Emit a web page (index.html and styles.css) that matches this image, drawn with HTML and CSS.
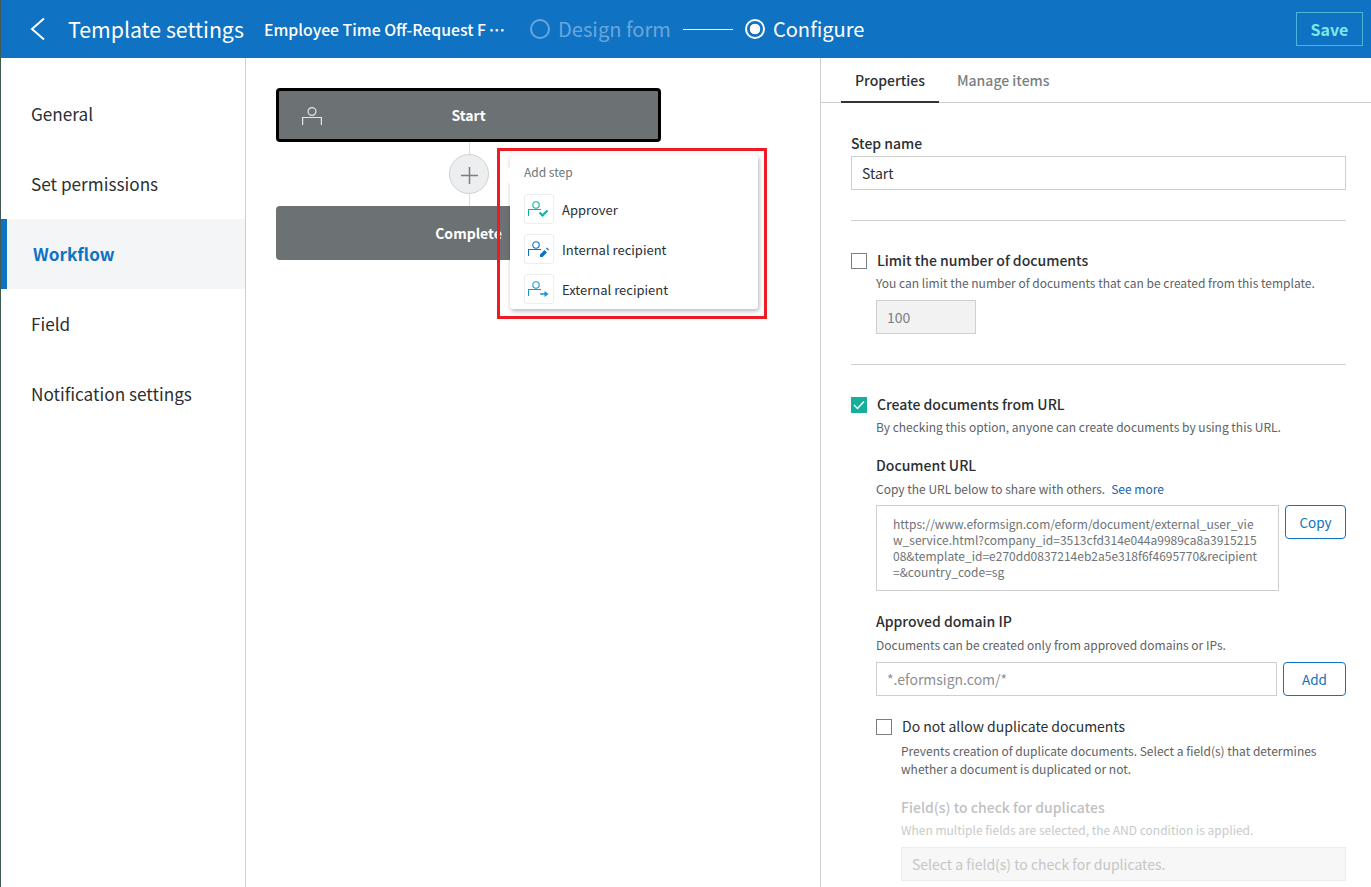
FILE: index.html
```html
<!DOCTYPE html>
<html lang="en">
<head>
<meta charset="utf-8">
<title>Template settings</title>
<link rel="stylesheet" href="styles.css">
</head>
<body>
<header class="topbar">
  <svg class="back" width="16" height="24" viewBox="0 0 16 24"><path d="M14 1.500 2 12 14 22.500" fill="none" stroke="#fff" stroke-width="2"/></svg>
  <h1 class="title">Template settings</h1>
  <div class="doc-name">Employee Time Off-Request F<span class="dots">···</span></div>
  <div class="step step-off"><span class="radio"></span>Design form</div>
  <span class="step-line"></span>
  <div class="step"><span class="radio radio-on"></span>Configure</div>
  <button class="save">Save</button>
</header>
<div class="main">
  <nav class="side">
    <a class="nav-item">General</a>
    <a class="nav-item">Set permissions</a>
    <a class="nav-item nav-active">Workflow</a>
    <a class="nav-item">Field</a>
    <a class="nav-item">Notification settings</a>
  </nav>
  <section class="canvas">
    <div class="node node-start">
      <svg class="node-icon" width="20" height="18" viewBox="0 0 20 18"><g fill="none" stroke="#e6e8e8" stroke-width="1.200"><circle cx="10" cy="4.500" r="3.900"/><path d="M.6 18v-7.500h18.800V18"/></g></svg>
      Start
    </div>
    <div class="link"><div class="add-btn"><svg class="plus" width="17" height="17" viewBox="0 0 17 17"><path d="M8.500 0v17M0 8.500h17" stroke="#7a7f82" stroke-width="1.500"/></svg></div></div>
    <div class="node">Complete</div>
    <div class="menu">
      <div class="menu-title">Add step</div>
      <div class="menu-item">
        <span class="menu-icon"><svg width="22" height="20" viewBox="0 0 22 20"><g fill="none" stroke="#14b09b" stroke-width="1.100"><circle cx="8" cy="6" r="3.200"/><path d="M.5 17v-6.500H13"/></g><path d="M11.500 13.500l3 3 5-5" fill="none" stroke="#14b09b" stroke-width="2"/></svg></span>Approver
      </div>
      <div class="menu-item">
        <span class="menu-icon"><svg width="22" height="20" viewBox="0 0 22 20"><g fill="none" stroke="#0f72c3" stroke-width="1.100"><circle cx="8" cy="6" r="3.200"/><path d="M.5 17v-6.500H13"/></g><path d="M12 18v-2.500l4.500-4.500 2.500 2.500-4.500 4.500zM18 9.500l1-1 2 2-1 1z" fill="#0f72c3"/></svg></span>Internal recipient
      </div>
      <div class="menu-item">
        <span class="menu-icon"><svg width="22" height="20" viewBox="0 0 22 20"><g fill="none" stroke="#1a94cf" stroke-width="1.100"><circle cx="8" cy="6" r="3.200"/><path d="M.5 17v-6.500H13"/></g><path d="M12 14.300h5v1.400h-5zM16.500 12l4 3-4 3z" fill="#1a94cf"/></svg></span>External recipient
      </div>
    </div>
    <div class="highlight"></div>
  </section>
  <aside class="panel">
    <div class="tabs"><span class="tab tab-on">Properties</span><span class="tab">Manage items</span></div>
    <div class="panel-body">
      <label class="label">Step name</label>
      <div class="input input-step">Start</div>
      <hr class="rule rule-a">
      <div class="check-row"><span class="check"></span><span class="label label-up">Limit the number of documents</span></div>
      <p class="hint hint-first">You can limit the number of documents that can be created from this template.</p>
      <div class="input input-num">100</div>
      <hr class="rule rule-b">
      <div class="check-row"><span class="check check-on"><svg width="12" height="10" viewBox="0 0 12 10"><path d="M1 5l3.500 3.500L11 1.500" fill="none" stroke="#fff" stroke-width="1.400"/></svg></span><span class="label label-up">Create documents from URL</span></div>
      <p class="hint hint-first">By checking this option, anyone can create documents by using this URL.</p>
      <div class="indent">
        <label class="label label-up label-url">Document URL</label>
        <p class="hint hint-sub">Copy the URL below to share with others.<a class="more">See more</a></p>
        <div class="field-row row-url">
          <div class="url-box">https://www.eformsign.com/eform/document/external_user_vie<br>w_service.html?company_id=3513cfd314e044a9989ca8a3915215<br>08&amp;template_id=e270dd0837214eb2a5e318f6f4695770&amp;recipient<br>=&amp;country_code=sg</div>
          <button class="btn btn-copy">Copy</button>
        </div>
        <label class="label label-up label-ip">Approved domain IP</label>
        <p class="hint hint-sub">Documents can be created only from approved domains or IPs.</p>
        <div class="field-row row-ip">
          <div class="input input-ip">*.eformsign.com/*</div>
          <button class="btn btn-add">Add</button>
        </div>
        <div class="check-row check-dup"><span class="check"></span><span class="dup-label">Do not allow duplicate documents</span></div>
        <div class="dup">
          <p class="hint hint-dup">Prevents creation of duplicate documents. Select a field(s) that determines<br>whether a document is duplicated or not.</p>
          <div class="label label-off">Field(s) to check for duplicates</div>
          <p class="hint hint-off">When multiple fields are selected, the AND condition is applied.</p>
          <div class="input input-off">Select a field(s) to check for duplicates.</div>
        </div>
      </div>
    </div>
  </aside>
</div>
</body>
</html>
```
FILE: styles.css
```css
* { box-sizing: border-box; }
html, body { margin: 0; height: 100%; overflow: hidden; }
body {
  font-family: "Noto Sans CJK KR", "Noto Sans", sans-serif;
  color: #2b2f33;
  background: #fff;
  border-left: 1px solid #3f5a55;
  width: 1371px;
  height: 887px;
}
.topbar {
  height: 58px;
  background: #0f72c3;
  display: flex;
  align-items: center;
  color: #fff;
  padding-left: 29px;
  margin-left: -1px;
  border-left: 1px solid #4d7a8c;
}
.back { flex: none; }
.title { font-size: 21.300px; font-weight: 400; margin: -2px 0 0 22px; width: 196px; white-space: nowrap; }
.doc-name { font-size: 15.800px; font-weight: 500; width: 266px; white-space: nowrap; }
.dots { letter-spacing: -3.700px; margin-left: 1px; }
.step { display: flex; align-items: center; font-size: 20.100px; gap: 8px; white-space: nowrap; padding-bottom: 1px; }
.step-off { color: #6aa6da; }
.radio { width: 20px; height: 20px; border: 2px solid currentColor; border-radius: 50%; display: block; }
.radio-on { background: radial-gradient(circle, #fff 0 5px, transparent 5.600px); }
.step-line { width: 50px; height: 1px; background: #fff; margin: 0 12px; }
.save {
  margin-left: auto;
  margin-right: 8px;
  width: 67px;
  height: 34px;
  background: transparent;
  border: 1px solid #4db4d8;
  color: #7ee8e8;
  font: 700 16px "Noto Sans CJK KR", sans-serif;
  padding: 0;
}
.main { display: flex; height: 829px; }
.side { width: 245px; flex: none; border-right: 1px solid #cfcfcf; padding-top: 21px; }
.nav-item { display: flex; align-items: center; height: 70px; padding: 0 0 1px 30px; font-size: 17.200px; color: #2b2f33; }
.nav-active { background: #f4f5f7; border-left: 6px solid #0f72c3; padding-left: 26px; color: #0f72c3; font-weight: 700; }
.canvas { width: 574px; flex: none; position: relative; padding: 30px 0 0 30px; }
.node {
  width: 385px;
  height: 54px;
  background: #6c7173;
  border-radius: 4px;
  color: #fff;
  font-size: 14px;
  font-weight: 700;
  display: flex;
  align-items: center;
  justify-content: center;
  position: relative;
}
.node-start { border: 3px solid #000; }
.node-icon { position: absolute; left: 23px; top: 16px; }
.link { width: 385px; height: 64px; position: relative; display: flex; align-items: center; justify-content: center; }
.link::before { content: ""; position: absolute; left: 193px; top: 0; bottom: 0; width: 1px; background: #dcdcdc; }
.add-btn {
  width: 40px; height: 40px; border-radius: 50%;
  background: #eceef0; border: 1px solid #cfd2d4;
  display: flex; align-items: center; justify-content: center;
  position: relative;
}
.plus { margin: 2px 0 0 2px; }
.menu {
  position: absolute;
  left: 264px;
  top: 97px;
  width: 248px;
  height: 154px;
  background: #fff;
  border-radius: 3px;
  box-shadow: 1px 2px 5px rgba(0,0,0,.3);
  padding: 7px 14px;
}
.menu::before {
  content: ""; position: absolute; left: -6.500px; top: 13.500px; width: 13px; height: 13px;
  background: #fff; transform: rotate(45deg);
}
.menu-title { font-size: 12px; color: #6e7479; height: 20px; line-height: 20px; margin-bottom: 7px; position: relative; }
.menu-item { display: flex; align-items: center; height: 40px; font-size: 13px; color: #2b2f33; gap: 8px; }
.menu-icon {
  width: 30px; height: 30px; flex: none;
  border: 1px solid #eceef0; border-radius: 3px;
  display: flex; align-items: center; justify-content: center;
}
.highlight {
  position: absolute;
  left: 251px; top: 90px;
  width: 270px; height: 171px;
  border: 3px solid #ed1c24;
}
.panel { flex: 1; border-left: 1px solid #cfcfcf; min-width: 0; }
.tabs { height: 45px; border-bottom: 1px solid #cfcfcf; display: flex; padding-left: 20px; }
.tab { padding: 0 14px; height: 45px; line-height: 44px; font-size: 14px; font-weight: 500; color: #7b7f82; margin-right: 4px; }
.tab-on { color: #2b2f33; border-bottom: 2px solid #333; }
.panel-body { padding: 30px 25px 0 30px; }
.label { display: block; font-size: 14px; font-weight: 500; line-height: 20px; color: #2b2f33; white-space: nowrap; }
.label-up { line-height: 18px; padding-bottom: 2px; }
.input {
  border: 1px solid #cfcfcf;
  height: 34px;
  line-height: 32px;
  font-size: 14px;
  padding: 0 10px;
  color: #2b2f33;
}
.input-step { margin-top: 3px; }
.rule { border: 0; border-top: 1px solid #cfcfcf; margin: 0; }
.rule-a { margin-top: 30px; margin-bottom: 30px; }
.rule-b { margin-top: 30px; margin-bottom: 30px; }
.check-row { display: flex; align-items: center; gap: 10px; height: 20px; }
.check { width: 16px; height: 16px; border: 1px solid #7b7f82; flex: none; display: flex; align-items: center; justify-content: center; }
.check-on { background: #14b09b; border-color: #14b09b; }
.hint { font-size: 12px; color: #5d6266; margin: 0; line-height: 18px; white-space: nowrap; }
.hint-first { margin: 3px 0 0 25px; }
.input-num { width: 100px; margin: 8px 0 0 25px; background: #f2f2f2; color: #7b7f82; }
.indent { padding-left: 25px; }
.label-url { margin-top: 20px; }
.hint-sub { margin-top: 4px; }
.more { color: #0f66b0; margin-left: 6px; }
.field-row { display: flex; justify-content: space-between; align-items: flex-start; }
.row-url { margin-top: 7px; }
.url-box {
  width: 403px; height: 86px;
  border: 1px solid #cfcfcf;
  padding: 10px 16px 0;
  font-size: 12px;
  line-height: 16px;
  color: #6e7376;
  white-space: nowrap;
  overflow: hidden;
}
.btn { background: #fff; border: 1px solid #0f72c3; border-radius: 4px; color: #0f72c3; font: 400 13.500px "Noto Sans CJK KR", sans-serif; padding: 0; }
.btn-copy { width: 61px; height: 34px; }
.btn-add { width: 63px; height: 34px; }
.label-ip { margin-top: 21px; }
.row-ip { margin-top: 8px; }
.input-ip { width: 401px; color: #8c9093; }
.check-dup { margin-top: 21px; }
.dup-label { font-size: 14px; line-height: 18px; padding-bottom: 3px; color: #2b2f33; }
.dup { padding-left: 25px; }
.hint-dup { margin-top: 5px; }
.label-off { color: #bfc1c3; margin-top: 19px; }
.hint-off { color: #c8cacb; margin-top: 4px; }
.input-off { margin-top: 8px; background: #f7f7f7; border-color: #ececec; color: #c4c6c7; }
```
